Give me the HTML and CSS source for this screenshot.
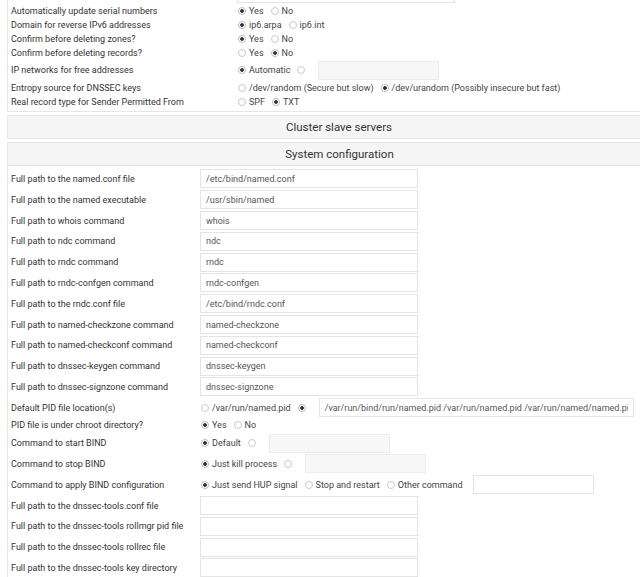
FILE: index.html
```html
<!DOCTYPE html>
<html lang="en">
<head>
  <meta charset="UTF-8">
  <title>BIND DNS Server module configuration</title>
  <link rel="stylesheet" href="styles.css">
</head>
<body>
  <div class="page">

    <!-- zone defaults (scrolled, top row cut off) -->
    <div class="panel top">
      <div class="row tall">
        <span class="label"></span>
        <span class="ctl"><input class="field" type="text" value=""></span>
      </div>
      <div class="row">
        <span class="label">Automatically update serial numbers</span>
        <span class="ctl">
          <label class="opt"><input type="radio" name="upd" checked>Yes</label>
          <label class="opt"><input type="radio" name="upd">No</label>
        </span>
      </div>
      <div class="row">
        <span class="label">Domain for reverse IPv6 addresses</span>
        <span class="ctl">
          <label class="opt"><input type="radio" name="ipv6" checked>ip6.arpa</label>
          <label class="opt"><input type="radio" name="ipv6">ip6.int</label>
        </span>
      </div>
      <div class="row">
        <span class="label">Confirm before deleting zones?</span>
        <span class="ctl">
          <label class="opt"><input type="radio" name="cz" checked>Yes</label>
          <label class="opt"><input type="radio" name="cz">No</label>
        </span>
      </div>
      <div class="row">
        <span class="label">Confirm before deleting records?</span>
        <span class="ctl">
          <label class="opt"><input type="radio" name="cr">Yes</label>
          <label class="opt"><input type="radio" name="cr" checked>No</label>
        </span>
      </div>
      <div class="row tall">
        <span class="label">IP networks for free addresses</span>
        <span class="ctl">
          <label class="opt"><input type="radio" name="free" checked>Automatic</label>
          <label class="opt gap"><input type="radio" name="free"></label>
          <input class="field short" type="text" disabled>
        </span>
      </div>
      <div class="row">
        <span class="label">Entropy source for DNSSEC keys</span>
        <span class="ctl">
          <label class="opt"><input type="radio" name="rnd">/dev/random (Secure but slow)</label>
          <label class="opt"><input type="radio" name="rnd" checked>/dev/urandom (Possibly insecure but fast)</label>
        </span>
      </div>
      <div class="row">
        <span class="label">Real record type for Sender Permitted From</span>
        <span class="ctl">
          <label class="opt"><input type="radio" name="spf">SPF</label>
          <label class="opt"><input type="radio" name="spf" checked>TXT</label>
        </span>
      </div>
    </div>

    <div class="panel closed">
      <div class="head">Cluster slave servers</div>
    </div>

    <div class="panel sys">
      <div class="head">System configuration</div>
      <div class="body">
        <div class="row tall">
          <span class="label">Full path to the named.conf file</span>
          <span class="ctl"><input class="field" type="text" value="/etc/bind/named.conf"></span>
        </div>
        <div class="row tall">
          <span class="label">Full path to the named executable</span>
          <span class="ctl"><input class="field" type="text" value="/usr/sbin/named"></span>
        </div>
        <div class="row tall">
          <span class="label">Full path to whois command</span>
          <span class="ctl"><input class="field" type="text" value="whois"></span>
        </div>
        <div class="row tall">
          <span class="label">Full path to ndc command</span>
          <span class="ctl"><input class="field" type="text" value="ndc"></span>
        </div>
        <div class="row tall">
          <span class="label">Full path to rndc command</span>
          <span class="ctl"><input class="field" type="text" value="rndc"></span>
        </div>
        <div class="row tall">
          <span class="label">Full path to rndc-confgen command</span>
          <span class="ctl"><input class="field" type="text" value="rndc-confgen"></span>
        </div>
        <div class="row tall">
          <span class="label">Full path to the rndc.conf file</span>
          <span class="ctl"><input class="field" type="text" value="/etc/bind/rndc.conf"></span>
        </div>
        <div class="row tall">
          <span class="label">Full path to named-checkzone command</span>
          <span class="ctl"><input class="field" type="text" value="named-checkzone"></span>
        </div>
        <div class="row tall">
          <span class="label">Full path to named-checkconf command</span>
          <span class="ctl"><input class="field" type="text" value="named-checkconf"></span>
        </div>
        <div class="row tall">
          <span class="label">Full path to dnssec-keygen command</span>
          <span class="ctl"><input class="field" type="text" value="dnssec-keygen"></span>
        </div>
        <div class="row tall">
          <span class="label">Full path to dnssec-signzone command</span>
          <span class="ctl"><input class="field" type="text" value="dnssec-signzone"></span>
        </div>
        <div class="row tall">
          <span class="label">Default PID file location(s)</span>
          <span class="ctl">
            <label class="opt"><input type="radio" name="pid">/var/run/named.pid</label>
            <label class="opt gap"><input type="radio" name="pid" checked></label>
            <input class="field wide" type="text" value="/var/run/bind/run/named.pid /var/run/named.pid /var/run/named/named.pid">
          </span>
        </div>
        <div class="row">
          <span class="label">PID file is under chroot directory?</span>
          <span class="ctl">
            <label class="opt"><input type="radio" name="chroot" checked>Yes</label>
            <label class="opt"><input type="radio" name="chroot">No</label>
          </span>
        </div>
        <div class="row tall">
          <span class="label">Command to start BIND</span>
          <span class="ctl">
            <label class="opt"><input type="radio" name="start" checked>Default</label>
            <label class="opt gap"><input type="radio" name="start"></label>
            <input class="field short" type="text" disabled>
          </span>
        </div>
        <div class="row tall">
          <span class="label">Command to stop BIND</span>
          <span class="ctl">
            <label class="opt"><input type="radio" name="stop" checked>Just kill process</label>
            <label class="opt gap"><input type="radio" name="stop"></label>
            <input class="field short" type="text" disabled>
          </span>
        </div>
        <div class="row tall">
          <span class="label">Command to apply BIND configuration</span>
          <span class="ctl">
            <label class="opt"><input type="radio" name="apply" checked>Just send HUP signal</label>
            <label class="opt"><input type="radio" name="apply">Stop and restart</label>
            <label class="opt gap"><input type="radio" name="apply">Other command</label>
            <input class="field short" type="text">
          </span>
        </div>
        <div class="row tall">
          <span class="label">Full path to the dnssec-tools.conf file</span>
          <span class="ctl"><input class="field" type="text"></span>
        </div>
        <div class="row tall">
          <span class="label">Full path to the dnssec-tools rollmgr pid file</span>
          <span class="ctl"><input class="field" type="text"></span>
        </div>
        <div class="row tall">
          <span class="label">Full path to the dnssec-tools rollrec file</span>
          <span class="ctl"><input class="field" type="text"></span>
        </div>
        <div class="row tall">
          <span class="label">Full path to the dnssec-tools key directory</span>
          <span class="ctl"><input class="field" type="text"></span>
        </div>
      </div>
    </div>

  </div>
</body>
</html>
```

FILE: styles.css
```css
html, body {
  margin: 0;
  overflow: hidden;
  background: #fff;
}
body {
  font-family: Roboto, "Liberation Sans", sans-serif;
  font-size: 9px;
  color: #333;
}
.page {
  width: 664px;
  padding-left: 7px;
}
.panel {
  border: 1px solid #e6e6e6;
}
.top {
  margin-top: -18px;
  padding-bottom: 2px;
}
.closed, .sys {
  margin-top: 3px;
}
.head {
  height: 22px;
  line-height: 22px;
  background: #f5f5f5;
  text-align: center;
  font-size: 11.5px;
  color: #333;
}
.sys .head {
  border-bottom: 1px solid #e3e3e3;
}
.sys {
  border-right: none;
  border-bottom: none;
}
.body {
  padding-top: 3px;
}
.row {
  display: flex;
  align-items: center;
  height: 14px;
  white-space: nowrap;
}
.row.tall {
  height: 20.8px;
}
.sys .row:not(.tall) {
  height: 14.6px;
}
.label {
  flex: none;
  box-sizing: border-box;
  width: 229px;
  padding-left: 3px;
}
.sys .label {
  width: 192px;
}
.ctl {
  display: flex;
  align-items: center;
  padding-left: 1px;
}
.opt {
  display: inline-flex;
  align-items: center;
  margin-right: 7px;
  color: #444;
}
.opt.gap {
  margin-right: 11px;
}
input[type=radio] {
  -webkit-appearance: none;
  appearance: none;
  flex: none;
  box-sizing: border-box;
  width: 8px;
  height: 8px;
  margin: 0 3px 0 0;
  border: 1px solid #cacaca;
  border-radius: 50%;
  background: #fff;
}
input[type=radio]:checked {
  border-color: #bdbdbd;
  background: radial-gradient(circle, #333 0 1.5px, #fff 2.2px);
}
.field {
  box-sizing: border-box;
  width: 218px;
  height: 19px;
  margin: 0;
  padding: 0 5px;
  border: 1px solid #e4e4e4;
  border-radius: 0;
  background: #fff;
  font: inherit;
  color: #555;
  outline: none;
}
.ctl > .field {
  margin-left: -1px;
}
.field.short {
  width: 121px;
}
.field.wide {
  width: 315px;
}
.field:disabled {
  background: #f7f7f7;
  border-color: #ececec;
}
```
